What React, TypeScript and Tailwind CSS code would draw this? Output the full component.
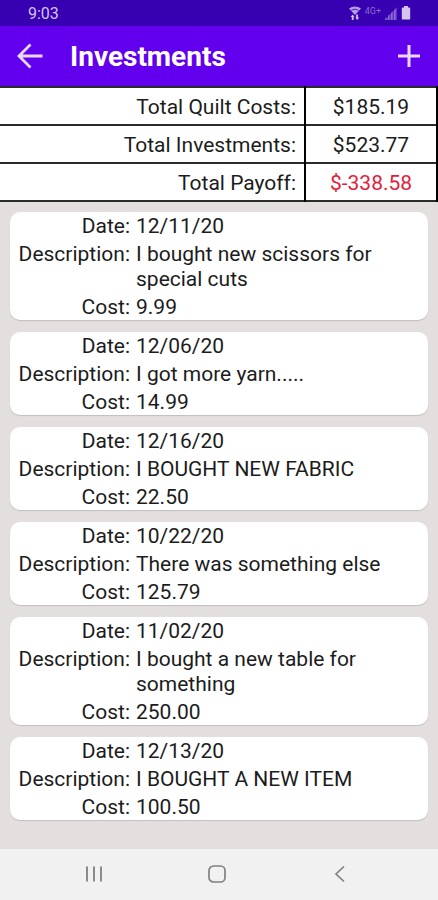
type Investment = {
  date: string;
  description: string;
  cost: string;
};

const totals = [
  { label: "Total Quilt Costs:", value: "$185.19", color: "text-[#1c1c1c]" },
  { label: "Total Investments:", value: "$523.77", color: "text-[#1c1c1c]" },
  { label: "Total Payoff:", value: "$-338.58", color: "text-[#e3203c]" },
];

const investments: Investment[] = [
  { date: "12/11/20", description: "I bought new scissors for special cuts", cost: "9.99" },
  { date: "12/06/20", description: "I got more yarn.....", cost: "14.99" },
  { date: "12/16/20", description: "I BOUGHT NEW FABRIC", cost: "22.50" },
  { date: "10/22/20", description: "There was something else", cost: "125.79" },
  { date: "11/02/20", description: "I bought a new table for something", cost: "250.00" },
  { date: "12/13/20", description: "I BOUGHT A NEW ITEM", cost: "100.50" },
];

function StatusBar() {
  return (
    <div className="flex h-[26px] items-center justify-between bg-[#3700b0] pl-7 pr-[27px] text-[#d3c4f2]">
      <span className="pt-[2px] text-base leading-none">9:03</span>
      <div className="flex items-center gap-1">
        {/* Wifi with data arrows */}
        <svg width="12" height="16" viewBox="0 0 12 16" fill="currentColor">
          <path d="M0 3.6C3.4.8 8.6.8 12 3.6L6 10z" opacity=".8" />
          <path d="M2.4 5.4c2.2-1.5 5-1.5 7.2 0" fill="none" stroke="#3700b0" strokeWidth=".8" />
          <path d="M1.6 12l2-2.6 2 2.6H4.6v3H2.8v-3zM6.2 12.4h1V9.6H9v2.8h1.2L8.2 15z" />
        </svg>
        <span className="pb-1 text-[9px] leading-none text-[#8a6bd2]">4G+</span>
        <svg width="12" height="13" viewBox="0 0 12 13" fill="currentColor">
          <path d="M12 0v13H0z" opacity=".25" />
          <path d="M0 13v-1.6l1.6-1.7V13zM3 13V8.6L4.6 7v6zM6 13V6l1.6-1.7V13zM9 13V3l1.6-1.7V13z" opacity=".4" />
        </svg>
        <svg width="10" height="14" viewBox="0 0 10 14" fill="currentColor">
          <path d="M3 0h4v1.6h1.4c.5 0 .8.3.8.8v10.4c0 .5-.3.8-.8.8H1.6c-.5 0-.8-.3-.8-.8V2.4c0-.5.3-.8.8-.8H3z" />
        </svg>
      </div>
    </div>
  );
}

function Header() {
  return (
    <header className="flex h-[60px] items-center bg-[#6200ee] px-4 text-[#ead9fd]">
      <button type="button" aria-label="Back">
        <svg width="28" height="28" viewBox="0 0 28 28" fill="none" stroke="currentColor" strokeWidth="2.8">
          <path d="M26.5 14H3M14.5 2.5L3 14l11.5 11.5" />
        </svg>
      </button>
      <h1 className="ml-[26px] flex-1 pt-[2px] text-[28px] font-bold text-white">Investments</h1>
      <button type="button" aria-label="Add investment">
        <svg width="26" height="26" viewBox="0 0 26 26" fill="none" stroke="currentColor" strokeWidth="3">
          <path d="M13 2v22M2 13h22" />
        </svg>
      </button>
    </header>
  );
}

function Totals() {
  return (
    <table className="w-full border-collapse bg-white text-[21px] leading-[25px]">
      <tbody>
        {totals.map((row) => (
          <tr key={row.label} className="h-[38px] border-y-2 border-[#2b2b2b]">
            <th scope="row" className="pr-2 pt-[2px] text-right font-normal">
              {row.label}
            </th>
            <td className={`w-[132px] border-x-2 border-black pt-[2px] text-center ${row.color}`}>{row.value}</td>
          </tr>
        ))}
      </tbody>
    </table>
  );
}

function InvestmentCard({ date, description, cost }: Investment) {
  return (
    <li className="rounded-[10px] bg-white px-2 pt-[2px] shadow-[0_1px_1px_rgba(0,0,0,0.15)]">
      <dl className="grid grid-cols-[112px_1fr] gap-x-[6px] gap-y-[3px] text-[21px] leading-[25px]">
        <dt className="text-right">Date:</dt>
        <dd>{date}</dd>
        <dt className="text-right">Description:</dt>
        <dd>{description}</dd>
        <dt className="text-right">Cost:</dt>
        <dd>{cost}</dd>
      </dl>
    </li>
  );
}

function NavBar() {
  return (
    <nav className="flex h-[51px] items-center justify-around bg-[#f1f1f1] pb-[2px] pl-8 pr-9 text-[#808080]">
      <button type="button" aria-label="Recent apps">
        <svg width="18" height="18" viewBox="0 0 18 18" stroke="currentColor" strokeWidth="1.8">
          <path d="M2 1.5v15M9 1.5v15M16 1.5v15" />
        </svg>
      </button>
      <button type="button" aria-label="Home">
        <svg width="18" height="18" viewBox="0 0 18 18" fill="none" stroke="currentColor" strokeWidth="1.7">
          <rect x="1" y="1" width="16" height="16" rx="4.5" />
        </svg>
      </button>
      <button type="button" aria-label="Back">
        <svg width="18" height="18" viewBox="0 0 18 18" fill="none" stroke="currentColor" strokeWidth="1.7">
          <path d="M13 1.5L5 9l8 7.5" />
        </svg>
      </button>
    </nav>
  );
}

export default function App() {
  return (
    <div className="flex min-h-screen flex-col bg-[#e3dfde] font-[Roboto,sans-serif] text-[#1c1c1c]">
      <StatusBar />
      <Header />
      <Totals />
      <main className="flex-1 px-[10px] pt-[10px]">
        <ul className="flex flex-col gap-3">
          {investments.map((item) => (
            <InvestmentCard key={item.date} {...item} />
          ))}
        </ul>
      </main>
      <NavBar />
    </div>
  );
}
